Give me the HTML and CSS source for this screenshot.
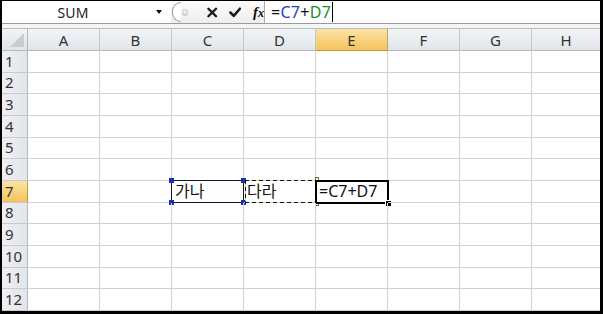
FILE: index.html
```html
<!DOCTYPE html>
<html>
<head>
<meta charset="utf-8">
<link rel="stylesheet" href="styles.css">
</head>
<body>
<div class="frame">
  <div class="fbar">
    <div class="namebox">
      <span class="name">SUM</span>
      <span class="caret"></span>
    </div>
    <div class="btns">
      <span class="cap"></span>
      <span class="grip"></span>
      <svg class="ico x" width="11" height="11" viewBox="0 0 11 11"><path d="M1.5 1.5 L9.5 9.5 M9.5 1.5 L1.5 9.5" stroke="#1a1a1a" stroke-width="2.5" stroke-linecap="round"/></svg>
      <svg class="ico ok" width="13" height="11" viewBox="0 0 13 11"><path d="M1.5 5.5 L5 9 L11.5 1.5" fill="none" stroke="#1a1a1a" stroke-width="2.7" stroke-linejoin="round" stroke-linecap="round"/></svg>
      <span class="fx">f<span class="fxx">x</span></span>
    </div>
    <div class="formula">=<span class="rc">C7</span>+<span class="rd">D7</span><span class="cursor"></span></div>
  </div>
  <div class="gap"></div>
  <div class="sheet">
    <div class="corner"><span class="tri"></span></div>
    <div class="ch">A</div><div class="ch">B</div><div class="ch">C</div><div class="ch">D</div><div class="ch sel">E</div><div class="ch">F</div><div class="ch">G</div><div class="ch last">H</div>

    <div class="rh">1</div><div class="c"></div><div class="c"></div><div class="c"></div><div class="c"></div><div class="c"></div><div class="c"></div><div class="c"></div><div class="c last"></div>
    <div class="rh">2</div><div class="c"></div><div class="c"></div><div class="c"></div><div class="c"></div><div class="c"></div><div class="c"></div><div class="c"></div><div class="c last"></div>
    <div class="rh">3</div><div class="c"></div><div class="c"></div><div class="c"></div><div class="c"></div><div class="c"></div><div class="c"></div><div class="c"></div><div class="c last"></div>
    <div class="rh">4</div><div class="c"></div><div class="c"></div><div class="c"></div><div class="c"></div><div class="c"></div><div class="c"></div><div class="c"></div><div class="c last"></div>
    <div class="rh">5</div><div class="c"></div><div class="c"></div><div class="c"></div><div class="c"></div><div class="c"></div><div class="c"></div><div class="c"></div><div class="c last"></div>
    <div class="rh">6</div><div class="c"></div><div class="c"></div><div class="c"></div><div class="c"></div><div class="c"></div><div class="c"></div><div class="c"></div><div class="c last"></div>
    <div class="rh sel">7</div><div class="c"></div><div class="c"></div>
    <div class="c txt">가나<span class="box-c"><i class="h tl"></i><i class="h tr"></i><i class="h bl"></i><i class="h br"></i></span></div>
    <div class="c txt">다라<span class="box-d"></span><span class="box-d2"><i class="g tr"></i><i class="g br"></i></span></div>
    <div class="c txt">=C7+D7<span class="box-e"><i class="fill"></i></span></div>
    <div class="c"></div><div class="c"></div><div class="c last"></div>
    <div class="rh">8</div><div class="c"></div><div class="c"></div><div class="c"></div><div class="c"></div><div class="c"></div><div class="c"></div><div class="c"></div><div class="c last"></div>
    <div class="rh">9</div><div class="c"></div><div class="c"></div><div class="c"></div><div class="c"></div><div class="c"></div><div class="c"></div><div class="c"></div><div class="c last"></div>
    <div class="rh">10</div><div class="c"></div><div class="c"></div><div class="c"></div><div class="c"></div><div class="c"></div><div class="c"></div><div class="c"></div><div class="c last"></div>
    <div class="rh">11</div><div class="c"></div><div class="c"></div><div class="c"></div><div class="c"></div><div class="c"></div><div class="c"></div><div class="c"></div><div class="c last"></div>
    <div class="rh">12</div><div class="c"></div><div class="c"></div><div class="c"></div><div class="c"></div><div class="c"></div><div class="c"></div><div class="c"></div><div class="c last"></div>
  </div>
</div>
</body>
</html>
```

FILE: styles.css
```css
* { box-sizing: border-box; }
html, body { margin: 0; padding: 0; background: #000; }
body { width: 603px; height: 314px; overflow: hidden; }

.frame {
  width: 603px;
  height: 314px;
  padding: 1px 3px 3px 2px;
  background: #000;
  display: flex;
  flex-direction: column;
  font-family: "Noto Sans", "Noto Sans CJK KR", sans-serif;
}

.fbar {
  height: 23px;
  flex: none;
  background: #fff;
  border-bottom: 1px solid #9a9a9a;
  display: flex;
  align-items: stretch;
}
.namebox {
  width: 169px;
  display: flex;
  align-items: center;
}
.name {
  width: 142px;
  text-align: center;
  font-size: 14px;
  color: #222;
  letter-spacing: 0.2px;
}
.caret {
  margin-left: 12px;
  width: 0; height: 0;
  border-left: 3.5px solid transparent;
  border-right: 3.5px solid transparent;
  border-top: 4px solid #111;
}
.btns {
  width: 94px;
  display: flex;
  align-items: center;
  background: linear-gradient(#fbfbfb, #eeeeee);
  border-right: 1px solid #a9a9a9;
}
.cap {
  width: 9px;
  height: 20px;
  border: 1px solid #9a9a9a;
  border-right: none;
  border-radius: 10px 0 0 10px;
  background: #fff;
  margin-left: 1px;
}
.grip {
  width: 7px; height: 7px;
  border-radius: 50%;
  background: radial-gradient(circle at 40% 35%, #fff, #c4c4c4);
  border: 1px solid #cfcfcf;
  margin-left: 1px;
}
.ico { display: block; }
.ico.x { margin-left: 19px; }
.ico.ok { margin-left: 11px; }
.fx {
  margin-left: 12px;
  font-family: "Liberation Serif", serif;
  font-style: italic;
  font-weight: bold;
  font-size: 15px;
  color: #111;
  line-height: 1;
}
.fxx { font-size: 12px; }

.formula {
  flex: 1;
  display: flex;
  align-items: center;
  padding-left: 6px;
  font-size: 16px;
  letter-spacing: 0.3px;
  color: #111;
  line-height: 1;
  font-family: "Noto Sans", sans-serif;
}
.rc { color: #1f3cc7; }
.rd { color: #1e8a2a; }
.cursor {
  width: 1px;
  height: 20px;
  background: #000;
  margin-left: 1px;
}

.gap {
  height: 4px;
  flex: none;
  background: #f4f5f6;
}

.sheet {
  height: 283px;
  flex: none;
  display: grid;
  grid-template-columns: 26px repeat(7, 72px) 68px;
  grid-template-rows: 23px repeat(12, minmax(0, 1fr));
  background: #fff;
  overflow: hidden;
}

.corner {
  background: linear-gradient(#f1f3f5, #e1e4e8);
  border-top: 1px solid #b9bdc3;
  border-right: 1px solid #b4b8be;
  border-bottom: 1px solid #b4b8be;
  position: relative;
}
.tri {
  position: absolute;
  right: 3px;
  bottom: 3px;
  width: 0; height: 0;
  border-left: 14px solid transparent;
  border-bottom: 14px solid #c8ccd1;
}

.ch {
  background: linear-gradient(#f3f5f7, #e1e5ea);
  border-top: 1px solid #b9bdc3;
  border-right: 1px solid #c2c6cc;
  border-bottom: 1px solid #b4b8be;
  display: flex;
  align-items: center;
  justify-content: center;
  font-size: 15px;
  line-height: 1;
  color: #333;
  padding-top: 1px;
}
.ch.sel {
  background: linear-gradient(#fbe3a6, #f4c45c);
  border-right-color: #c9a25a;
  border-bottom-color: #c9953a;
}
.ch.last { border-right: none; }

.rh {
  background: linear-gradient(90deg, #eef0f3, #e2e5e9);
  border-right: 1px solid #b4b8be;
  border-bottom: 1px solid #c8ccd1;
  display: flex;
  align-items: center;
  padding-left: 3px;
  font-size: 15px;
  line-height: 1;
  color: #333;
  min-height: 0;
}
.rh.sel {
  background: linear-gradient(#fbe3a6, #f4c45c);
  border-right-color: #c9953a;
}

.c {
  border-right: 1px solid #d2d2d2;
  border-bottom: 1px solid #d2d2d2;
  position: relative;
  min-height: 0;
}
.c.last { border-right: none; }
.c.txt {
  display: flex;
  align-items: center;
  padding-left: 3px;
  font-size: 16px;
  line-height: 1;
  color: #111;
  font-family: "Noto Sans", "Noto Sans CJK KR", sans-serif;
}

.box-c {
  position: absolute;
  left: -1px; top: -1px; right: -1px; bottom: -1px;
  border: 1px solid #15153a;
}
.h {
  position: absolute;
  width: 5px; height: 5px;
  background: #1a2fb8;
}
.h.tl { left: -3px; top: -3px; }
.h.tr { right: -3px; top: -3px; }
.h.bl { left: -3px; bottom: -3px; }
.h.br { right: -3px; bottom: -3px; }

.box-d {
  position: absolute;
  left: 1px; top: -1px; right: -1px; bottom: -1px;
  border: 1px solid #b8e09a;
}
.box-d2 {
  position: absolute;
  left: 1px; top: -1px; right: -1px; bottom: -1px;
  background:
    repeating-linear-gradient(90deg, #111 0 4px, transparent 4px 7px) top left / 100% 1px no-repeat,
    repeating-linear-gradient(90deg, #111 0 4px, transparent 4px 7px) bottom left / 100% 1px no-repeat,
    repeating-linear-gradient(180deg, #111 0 4px, transparent 4px 7px) top left / 1px 100% no-repeat,
    repeating-linear-gradient(180deg, #111 0 4px, transparent 4px 7px) top right / 1px 100% no-repeat;
}
.g {
  position: absolute;
  width: 4px; height: 4px;
  background: #fff;
  border: 1px solid #4a7a2a;
}
.g.tr { right: -3px; top: -3px; }
.g.br { right: -3px; bottom: -3px; }

.box-e {
  position: absolute;
  left: -1px; top: -1px; right: -2px; bottom: -2px;
  border: 2px solid #000;
}
.fill {
  position: absolute;
  right: -5px; bottom: -5px;
  width: 7px; height: 7px;
  background: #000;
  border: 1px solid #fff;
}
```
